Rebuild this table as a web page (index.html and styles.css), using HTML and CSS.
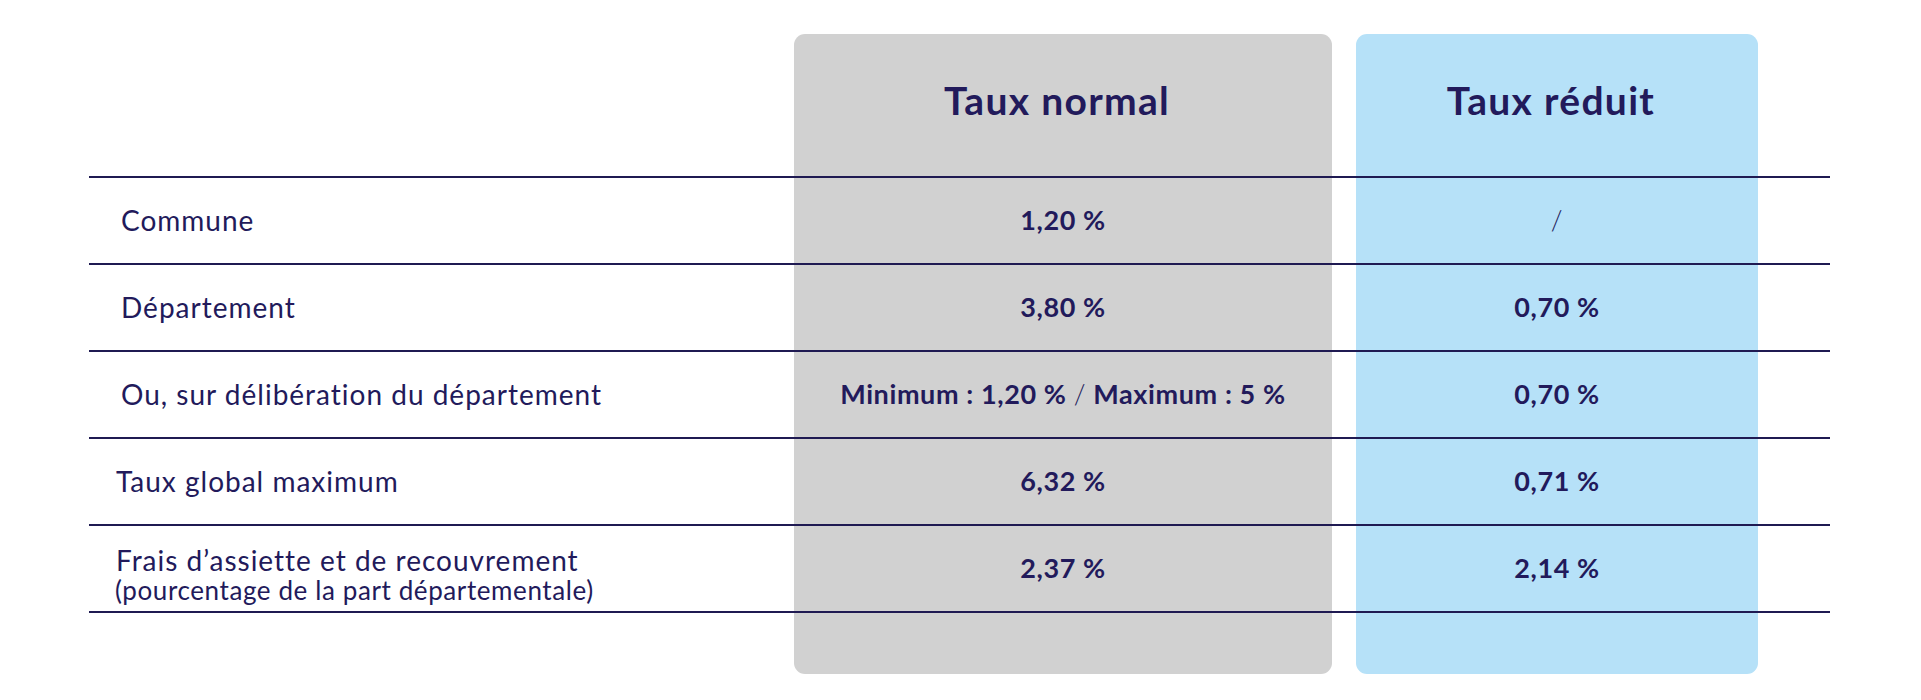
FILE: index.html
```html
<!DOCTYPE html>
<html lang="fr">
<head>
<meta charset="utf-8">
<title>Taux</title>
<link rel="stylesheet" href="styles.css">
</head>
<body>
<div class="table">
  <div class="col-bg col-normal"></div>
  <div class="col-bg col-reduit"></div>
  <div class="head head-normal">Taux normal</div>
  <div class="head head-reduit">Taux réduit</div>

  <div class="row r1">
    <div class="label">Commune</div>
    <div class="val v-normal">1,20 %</div>
    <div class="val v-reduit slash">/</div>
  </div>
  <div class="row r2">
    <div class="label">Département</div>
    <div class="val v-normal">3,80 %</div>
    <div class="val v-reduit">0,70 %</div>
  </div>
  <div class="row r3">
    <div class="label">Ou, sur délibération du département</div>
    <div class="val v-normal">Minimum : 1,20 % <span class="thin">/</span> Maximum : 5 %</div>
    <div class="val v-reduit">0,70 %</div>
  </div>
  <div class="row r4">
    <div class="label label-tight">Taux global maximum</div>
    <div class="val v-normal">6,32 %</div>
    <div class="val v-reduit">0,71 %</div>
  </div>
  <div class="row r5 last">
    <div class="label label-tight label-two">
      <span class="l1">Frais d’assiette et de recouvrement</span>
      <span class="l2">(pourcentage de la part départementale)</span>
    </div>
    <div class="val v-normal">2,37 %</div>
    <div class="val v-reduit">2,14 %</div>
  </div>
</div>
</body>
</html>
```

FILE: styles.css
```css
* { box-sizing: border-box; }
html, body { margin: 0; padding: 0; background: #ffffff; }
body {
  font-family: Lato, "Noto Sans", sans-serif;
  color: #221a5b;
  width: 1921px;
  height: 700px;
  overflow: hidden;
}
.table {
  display: grid;
  grid-template-columns: 705px 538px 24px 402px 72px;
  grid-template-rows: 142px 87px 87px 87px 87px 89px 61px;
  margin-left: 89px;
  margin-top: 34px;
  width: 1741px;
}
.col-bg {
  grid-row: 1 / -1;
  border-radius: 11px;
}
.col-normal { grid-column: 2; background: #d1d1d1; }
.col-reduit { grid-column: 4; background: #b6e1f8; }
.head {
  grid-row: 1;
  display: flex;
  align-items: center;
  justify-content: center;
  font-weight: 700;
  font-size: 39px;
  letter-spacing: 1.3px;
  padding-bottom: 10px;
  padding-right: 12px;
}
.head-normal { grid-column: 2; }
.head-reduit { grid-column: 4; }

.row {
  grid-column: 1 / -1;
  display: grid;
  grid-template-columns: 705px 538px 24px 402px 72px;
  border-top: 2px solid #1f1a52;
  align-items: center;
}
.r1 { grid-row: 2; }
.r2 { grid-row: 3; }
.r3 { grid-row: 4; }
.r4 { grid-row: 5; }
.r5 { grid-row: 6; }
.row.last { border-bottom: 2px solid #1f1a52; }

.label {
  grid-column: 1;
  font-size: 28px;
  letter-spacing: 1px;
  padding-left: 32px;
  padding-bottom: 2px;
}
.label-tight { padding-left: 27px; }
.label-two {
  display: flex;
  flex-direction: column;
  padding-top: 12px;
  padding-bottom: 0;
}
.l1 { font-size: 28px; line-height: 30px; }
.l2 { font-size: 26px; line-height: 30px; letter-spacing: 0.6px; margin-left: -1px; }

.val {
  text-align: center;
  font-weight: 700;
  font-size: 27px;
  letter-spacing: 0.6px;
  padding-bottom: 2px;
}
.v-normal { grid-column: 2; }
.v-reduit { grid-column: 4; }
.slash { font-weight: 300; }
.thin { font-weight: 300; }
```
